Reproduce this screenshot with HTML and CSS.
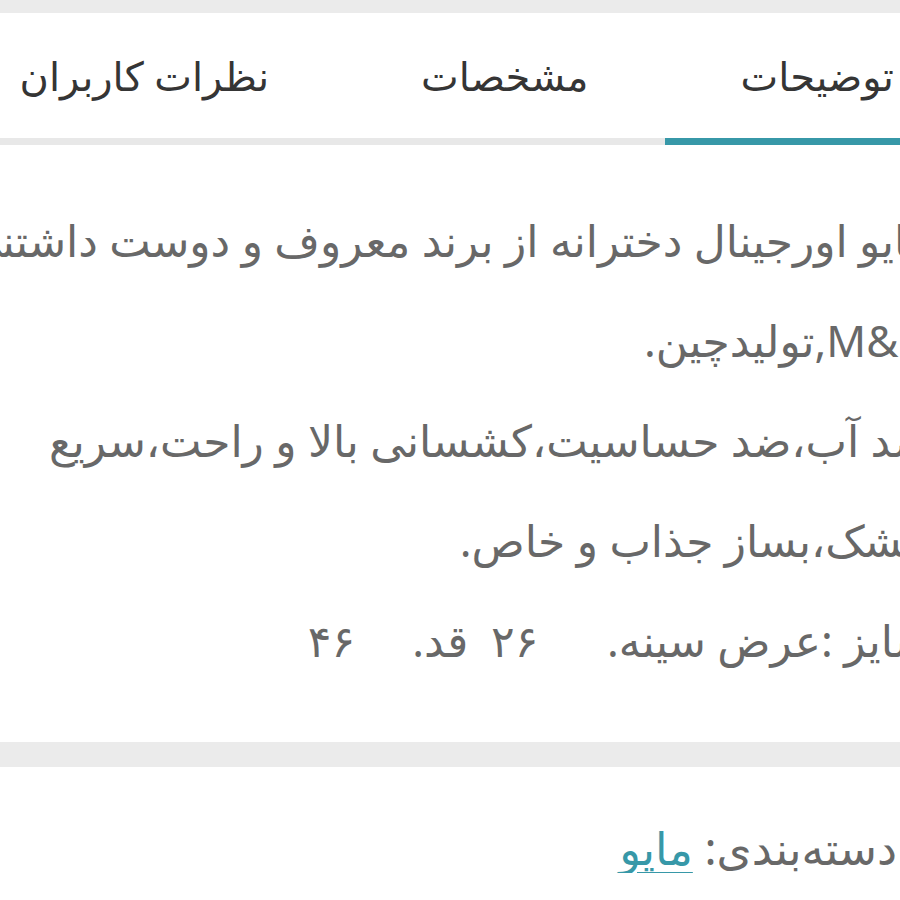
FILE: index.html
```
<!doctype html>
<html lang="fa" dir="rtl">
 <head>
  <meta charset="UTF-8">
  <title>مایو دخترانه</title>
  <link rel="stylesheet" href="styles.css">
 </head>
 <body>

	<!-- 전체 영역 -->
	<div id="wrap">

		<div class="top_gap"></div>

		<!-- 탭 메뉴 -->
		<div class="tabs">
			<div class="tab_list">
				<div class="tab active">توضیحات</div>
				<div class="tab">مشخصات</div>
				<div class="tab">نظرات کاربران</div>
			</div>
		</div>

		<!-- 상품 설명 -->
		<div class="desc">
			<div class="desc_lines">
				<p>مایو اورجینال دخترانه از برند معروف و دوست داشتنی</p>
				<p><bdo dir="rtl">H&amp;M</bdo>,تولیدچین.</p>
				<p>ضد آب،ضد حساسیت،کشسانی بالا و راحت،سریع</p>
				<p>خشک،بساز جذاب و خاص.</p>
				<p>سایز :عرض سینه.&nbsp;&nbsp;&nbsp;&nbsp;&nbsp;&nbsp;۲۶&nbsp;&nbsp;قد.&nbsp;&nbsp;&nbsp;&nbsp;&nbsp;۴۶</p>
			</div>
		</div>

		<div class="band"></div>

		<!-- 카테고리 -->
		<div class="cat">
			دسته‌بندی: <a href="#">مایو</a>
		</div>

	</div>

 </body>
</html>
```

FILE: styles.css
```
	html, body
	{
		margin:0;
		padding:0;
		background-color:white;
	}

	body
	{
		font-family:"Noto Sans", "DejaVu Sans", sans-serif;
		overflow:hidden;
	}

	div#wrap
	{
		width:100%;
		overflow:hidden;
	}

	/* 상단 회색 띠 */
	div.top_gap
	{
		height:13px;
		background-color:#ebebeb;
	}

	/* 탭 메뉴 */
	div.tabs
	{
		border-bottom:7px solid #e8e8e8;
	}

	div.tab_list
	{
		display:flex;
		flex-direction:row;
		margin-right:-70px;
		margin-bottom:-7px;
	}

	div.tab
	{
		height:125px;
		padding:0 76px;
		display:flex;
		align-items:center;
		white-space:nowrap;

		font-size:40px;
		color:#353535;
		border-bottom:7px solid transparent;
	}

	div.tab.active
	{
		border-bottom-color:#3798a8;
	}

	/* 상품 설명 */
	div.desc
	{
		padding:45px 0 52px 0;
	}

	div.desc_lines
	{
		margin-right:-31px;
	}

	div.desc_lines p
	{
		margin:0;
		height:100px;
		line-height:100px;
		white-space:nowrap;

		font-size:44px;
		color:#686868;
	}

	/* 회색 구분 띠 */
	div.band
	{
		height:25px;
		background-color:#ebebeb;
	}

	/* 카테고리 */
	div.cat
	{
		padding:56px 3px 0 0;
		font-size:45px;
		line-height:50px;
		color:#686868;
	}

	div.cat a
	{
		color:#3798a8;
		text-decoration:underline;
		text-underline-offset:7px;
	}
```
